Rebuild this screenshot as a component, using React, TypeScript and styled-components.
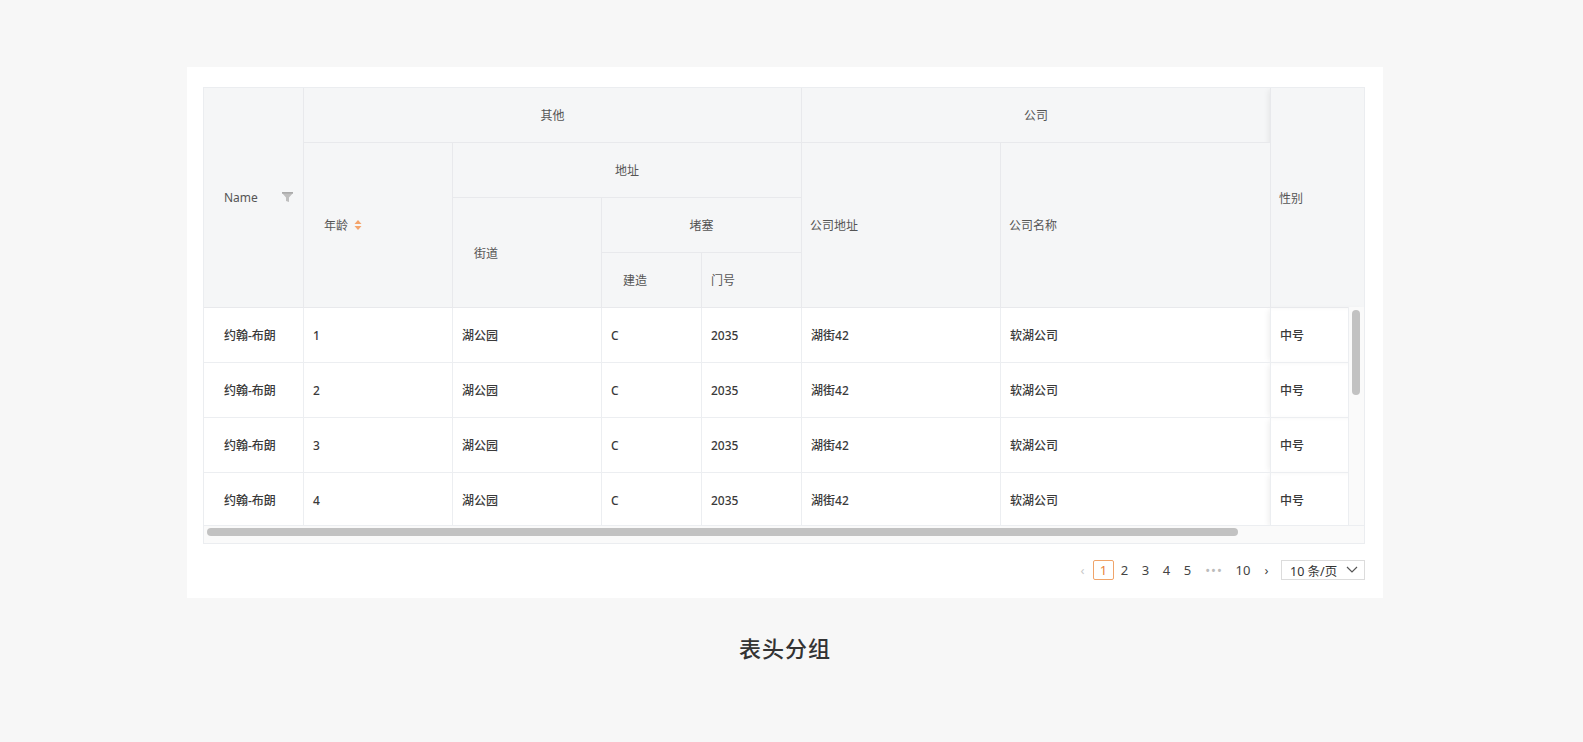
import React from "react";
import styled, { createGlobalStyle } from "styled-components";

const Global = createGlobalStyle`
  html, body { margin: 0; padding: 0; background: #f7f7f7; }
  body { font-family: "Noto Sans", "Noto Sans CJK SC", sans-serif; }
`;

const Page = styled.div`
  width: 1583px; height: 742px; display: flex; flex-direction: column; padding: 67px 0 0 187px; box-sizing: border-box;
`;
const Card = styled.div`
  width: 1196px; height: 531px; background: #fff; box-sizing: border-box; padding: 20px 18px 0 16px;
`;
const Frame = styled.div`
  position: relative; width: 1162px; height: 457px; border: 1px solid #ebedf0; box-sizing: border-box; overflow: hidden; background: #fff;
`;
const Table = styled.table`
  border-collapse: collapse; table-layout: fixed; width: 1162px; margin: -1px 0 0 -1px;
`;
const Th = styled.th<{ $align?: string; $pl?: number; $fixed?: boolean }>`
  height: 55px; background: #f5f6f7; border: 1px solid #e8e9ec; font-size: 12px; font-weight: 400; color: #555;
  text-align: ${p => p.$align || "left"}; padding: 0 8px 0 ${p => p.$pl ?? 8}px; box-sizing: border-box;
  ${p => p.$fixed ? "box-shadow: -4px 0 6px -2px rgba(0,0,0,0.08);" : ""}
`;
const Td = styled.td<{ $pl?: number; $fixed?: boolean }>`
  height: 55px; border: 1px solid #eceef1; font-size: 12px; color: #3a3a3a; font-weight: 500; padding: 0 8px 0 ${p => p.$pl ?? 9}px;
  white-space: nowrap; box-sizing: border-box;
  ${p => p.$fixed ? "box-shadow: -4px 0 6px -2px rgba(0,0,0,0.08);" : ""}
`;
const Inline = styled.span`display: inline-flex; align-items: center; gap: 6px;`;
const Spread = styled.span`display: flex; align-items: center; justify-content: space-between; padding-right: 2px;`;
const HTrack = styled.div`
  position: absolute; left: 0; right: 0; bottom: 0; height: 17px; background: #fafafa; border-top: 1px solid #eceef1;
`;
const HThumb = styled.div`
  position: absolute; left: 3px; top: 2px; width: 1031px; height: 8px; border-radius: 4px; background: #c2c2c2;
`;
const VTrack = styled.div`
  position: absolute; right: 0; top: 219px; width: 15px; bottom: 17px; background: #fafafa; border-left: 1px solid #eceef1;
`;
const VThumb = styled.div`
  position: absolute; left: 3px; top: 3px; width: 8px; height: 85px; border-radius: 4px; background: #c2c2c2;
`;
const Pager = styled.div`
  display: flex; justify-content: flex-end; align-items: center; margin-top: 16px; font-size: 13px; color: #444;
`;
const PItem = styled.span<{ $active?: boolean; $w?: number }>`
  min-width: ${p => p.$w ?? 21}px; height: 20px; display: inline-flex; align-items: center; justify-content: center; box-sizing: border-box;
  ${p => p.$active ? "border: 1px solid #f0a46a; border-radius: 2px; color: #e8833a;" : ""}
`;
const Select = styled.div`
  margin-left: 4px; width: 84px; height: 20px; border: 1px solid #dcdcdc; box-sizing: border-box; display: flex; align-items: center;
  justify-content: space-between; padding: 0 6px 0 8px; font-size: 12.5px; color: #333;
`;
const Title = styled.div`
  width: 1196px; text-align: center; margin-top: 33px; font-size: 22px; font-weight: 500; color: #333; letter-spacing: 1px;
`;

const Filter = () => (
  <svg width="11" height="11" viewBox="0 0 11 11"><path d="M0 1h11L7 5.5V10L4 9V5.5z" fill="#bfbfbf" /><rect x="0" y="0" width="11" height="1.6" fill="#aaa"/></svg>
);
const Sort = () => (
  <svg width="8" height="12" viewBox="0 0 8 12"><path d="M4 1L7.5 5h-7z" fill="#f4a46c" /><path d="M4 11L.5 7h7z" fill="#f4a46c" /></svg>
);

const rows = [1, 2, 3, 4];

export default function App() {
  return (
    <Page>
      <Global />
      <Card>
        <Frame>
          <Table>
            <colgroup>
              <col style={{ width: 100 }} /><col style={{ width: 149 }} /><col style={{ width: 149 }} />
              <col style={{ width: 100 }} /><col style={{ width: 100 }} /><col style={{ width: 199 }} />
              <col style={{ width: 270 }} /><col style={{ width: 96 }} />
            </colgroup>
            <thead>
              <tr>
                <Th rowSpan={4} $pl={20}><Spread>Name <Filter /></Spread></Th>
                <Th colSpan={4} $align="center">其他</Th>
                <Th colSpan={2} $align="center">公司</Th>
                <Th rowSpan={4} $fixed>性别</Th>
              </tr>
              <tr>
                <Th rowSpan={3} $pl={20}><Inline>年龄 <Sort /></Inline></Th>
                <Th colSpan={3} $align="center">地址</Th>
                <Th rowSpan={3}>公司地址</Th>
                <Th rowSpan={3}>公司名称</Th>
              </tr>
              <tr>
                <Th rowSpan={2} $pl={21}>街道</Th>
                <Th colSpan={2} $align="center">堵塞</Th>
              </tr>
              <tr>
                <Th $pl={21}>建造</Th>
                <Th $pl={9}>门号</Th>
              </tr>
            </thead>
            <tbody>
              {rows.map(r => (
                <tr key={r}>
                  <Td $pl={20}>约翰-布朗</Td>
                  <Td>{r}</Td>
                  <Td>湖公园</Td>
                  <Td>C</Td>
                  <Td>2035</Td>
                  <Td>湖街42</Td>
                  <Td>软湖公司</Td>
                  <Td $fixed>中号</Td>
                </tr>
              ))}
              <tr>
                {Array.from({ length: 7 }).map((_, i) => <Td key={i} />)}
                <Td $fixed />
              </tr>
            </tbody>
          </Table>
          <VTrack><VThumb /></VTrack>
          <HTrack><HThumb /></HTrack>
        </Frame>
        <Pager>
          <PItem style={{ color: "#c8c8c8" }}>‹</PItem>
          <PItem $active>1</PItem>
          <PItem>2</PItem><PItem>3</PItem><PItem>4</PItem><PItem>5</PItem>
          <PItem $w={32} style={{ color: "#bbb", letterSpacing: 1 }}>•••</PItem>
          <PItem $w={26}>10</PItem>
          <PItem>›</PItem>
          <Select>10 条/页
            <svg width="12" height="8" viewBox="0 0 12 8"><path d="M1 1l5 5 5-5" fill="none" stroke="#555" strokeWidth="1.2" /></svg>
          </Select>
        </Pager>
      </Card>
      <Title>表头分组</Title>
    </Page>
  );
}
